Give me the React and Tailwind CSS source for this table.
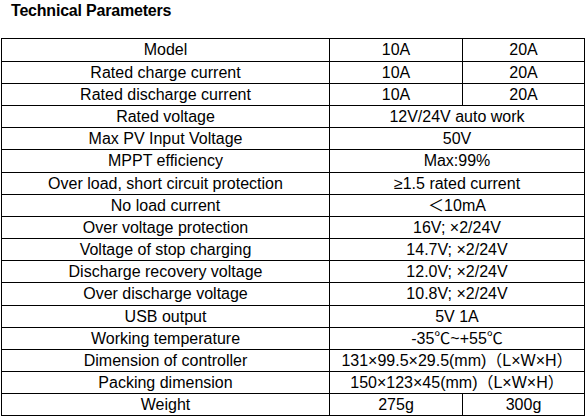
import React from "react";

const rows = [
  { label: "Model", a: "10A", b: "20A" },
  { label: "Rated charge current", a: "10A", b: "20A" },
  { label: "Rated discharge current", a: "10A", b: "20A" },
  { label: "Rated voltage", v: "12V/24V auto work" },
  { label: "Max PV Input Voltage", v: "50V" },
  { label: "MPPT efficiency", v: "Max:99%" },
  { label: "Over load, short circuit protection", v: "≥1.5 rated current" },
  { label: "No load current", v: "＜10mA" },
  { label: "Over voltage protection", v: "16V; ×2/24V" },
  { label: "Voltage of stop charging", v: "14.7V; ×2/24V" },
  { label: "Discharge recovery voltage", v: "12.0V; ×2/24V" },
  { label: "Over discharge voltage", v: "10.8V; ×2/24V" },
  { label: "USB output", v: "5V 1A" },
  { label: "Working temperature", v: "-35℃~+55℃" },
  { label: "Dimension of controller", v: "131×99.5×29.5(mm)（L×W×H）" },
  { label: "Packing dimension", v: "150×123×45(mm)（L×W×H）" },
  { label: "Weight", a: "275g", b: "300g" },
];

const App = () => {
  return (
    <div
      className="w-[587px] h-[420px] bg-white text-black overflow-hidden"
      style={{ fontFamily: '"Liberation Sans", "Noto Sans CJK SC", sans-serif' }}
    >
      {/* Title */}
      <div className="h-[38px] pl-[11px] pt-[1px] text-[16px] font-bold tracking-[-0.2px] leading-[20px]">
        Technical Parameters
      </div>
      {/* Table */}
      <div className="ml-[1px] w-[584px] border border-black flex flex-col">
        {rows.map((r, i) => (
          <div
            key={i}
            className={
              "flex text-[16px] leading-none " +
              (i === 0 ? "h-[22px] " : "border-t border-black ") +
              (i === 5 || i === 11 ? "h-[23px]" : i === 0 ? "" : "h-[22px]")
            }
          >
            <div className="w-[327px] flex items-center justify-center whitespace-nowrap">{r.label}</div>
            {r.v ? (
              <div className="flex-1 border-l border-black flex items-center justify-center whitespace-nowrap">
                {r.v}
              </div>
            ) : (
              <>
                <div className="w-[133px] border-l border-black flex items-center justify-center">{r.a}</div>
                <div className="flex-1 border-l border-black flex items-center justify-center">{r.b}</div>
              </>
            )}
          </div>
        ))}
      </div>
    </div>
  );
};

export default App;
